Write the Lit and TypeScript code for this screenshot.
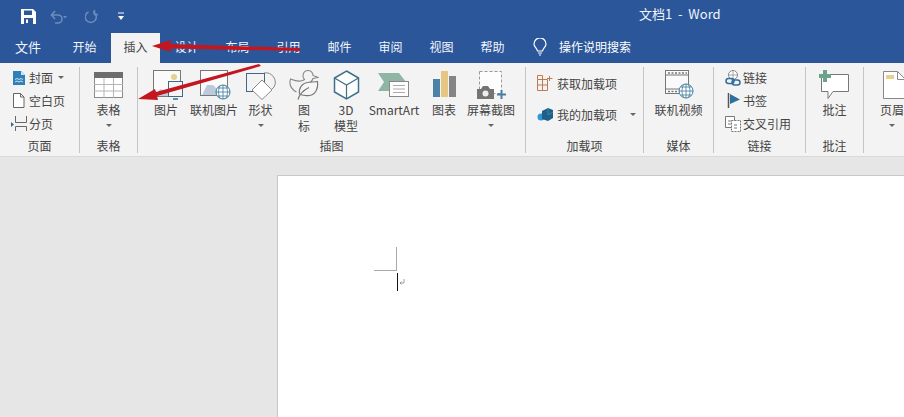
import { LitElement, html, css, svg } from "lit";
import { customElement } from "lit/decorators.js";

const ic = (w: number, h: number, body: unknown) =>
  html`<svg width=${w} height=${h} viewBox="0 0 ${w} ${h}" fill="none">${body}</svg>`;

const icons: Record<string, unknown> = {
  cover: ic(12, 14, svg`<path d="M0 0h8l4 4v10H0z" fill="#2f7fb8"/><path d="M8 0v4h4z" fill="#d5e6f1"/><path d="M2 8.500l2-1 2 1 2-1 2 1M2 11l2-1 2 1 2-1 2 1" stroke="#dcecf5" stroke-width=".9"/>`),
  blank: ic(13, 15, svg`<path d="M1.500.5h7l3.500 3.500v10.500H1.500z" stroke="#666" fill="#fff"/><path d="M8.500.5V4H12" stroke="#666"/>`),
  pagebreak: ic(16, 15, svg`<path d="M4.500 0v6.500h11V0M4.500 15v-4.500h11V15" stroke="#666"/><path d="M0 6l3 2.500L0 11z" fill="#2f6f9f"/>`),
  table: ic(29, 26, svg`<rect x=".5" y=".5" width="28" height="25" fill="#fff" stroke="#8a8a8a"/><rect x="0" y="0" width="29" height="6" fill="#6d6d6d"/><path d="M0 12.500h29M0 19h29M10 6v20M19.500 6v20" stroke="#b5b5b5"/>`),
  picture: ic(34, 30, svg`<rect x="4.500" y=".5" width="27" height="26" fill="#fafafa" stroke="#777"/><circle cx="25" cy="7" r="3" fill="#e7cf8f"/><path d="M6 26l5-7 6 2 4 5z" fill="#c3ccd9"/><rect x="19.500" y="11.500" width="14" height="15" fill="#f5f5f5" stroke="#3d6a88"/><path d="M24 29h5" stroke="#3d6a88" stroke-width="1.500"/>`),
  online: ic(34, 30, svg`<rect x="3.500" y=".5" width="27" height="25" fill="#fafafa" stroke="#777"/><path d="M5 25l5-10h6l5 5v5z" fill="#bccbdc"/><circle cx="26" cy="22" r="7" fill="#fff" stroke="#3d7a9c"/><path d="M19 22h14M26 15v14M21 18h10M21 26h10M23 16c-2 4-2 8 0 12M29 16c2 4 2 8 0 12" stroke="#3d7a9c" stroke-width=".8"/>`),
  shapes: ic(32, 31, svg`<path d="M19 4a9.500 9.500 0 0 1 10 14l-6 6" stroke="#888" fill="none"/><rect x="1.500" y="4.500" width="18" height="18" fill="none" stroke="#3d6a88"/><path d="M17 11l10 10-10 9.500L7 21z" fill="#fff" stroke="#888"/>`),
  icon: ic(30, 30, svg`<path d="M14 5.500a5 5 0 0 1 10 0l5 2-5 1c-.5 2-1.500 3-3 4M14 5.500c0 2 .5 3 1.500 4-3 2.500-8 2-14-.5-1.500 5 .5 10 6 13" stroke="#888" stroke-width="1.100"/><path d="M9 29.500c1-4 5-9 11-12M10.500 24c-1-6 3-11 8-11.500 4-.5 7-.5 10-1 1 7-2 13-8 14-4 .5-7 0-10-1.500z" stroke="#777" stroke-width="1.100" fill="#f6f6f6"/>`),
  cube: ic(27, 30, svg`<path d="M13.500 1l12 7v14l-12 7-12-7V8z" stroke="#3f7088" stroke-width="1.500" fill="#fdfdfd"/><path d="M1.500 8l12 7 12-7M13.500 15v14" stroke="#3f7088" stroke-width="1.200"/>`),
  smartart: ic(32, 26, svg`<path d="M0 1h21l7 9-7 9H0l6-9z" fill="#8fb5a5"/><rect x="11.500" y="9.500" width="19" height="15" fill="#fff" stroke="#888"/><path d="M15 13.500h12M15 17h12M15 20.500h12" stroke="#aaa"/>`),
  chart: ic(24, 27, svg`<rect x="1" y="8" width="7" height="18" fill="#4e81a8"/><rect x="9" y="0" width="7" height="26" fill="#e6c683"/><rect x="17" y="5" width="7" height="21" fill="#858585"/>`),
  shot: ic(30, 28, svg`<rect x="3.500" y=".5" width="22" height="22" fill="#fdfdfd" stroke="#999" stroke-dasharray="3 2"/><path d="M1 18h4l2-3h5l2 3h4v10H1z" fill="#747474"/><circle cx="9.500" cy="22.500" r="3" fill="#eee"/><path d="M21 23.500h9M25.500 19v9" stroke="#4a7fa3" stroke-width="2"/>`),
  getaddin: ic(16, 16, svg`<path d="M.5 4.500h10v11H.5zM.5 10h10M5.500 4.500v11M.5 4.500V.5h5v4" stroke="#c07a50"/><path d="M10 3.500h5.500M12.500 1v5" stroke="#c07a50"/>`),
  myaddin: ic(16, 15, svg`<circle cx="4" cy="10" r="3.500" fill="#2f97d6"/><path d="M5 4l6-3 5 2v8l-5 3-6-2z" fill="#1f5f88"/><path d="M11 1v7l5-3" stroke="#3c86b5"/>`),
  video: ic(30, 30, svg`<rect x="1.500" y=".5" width="23" height="23" fill="#fafafa" stroke="#777"/><path d="M1 5h24M1 19h24" stroke="#777"/><path d="M4 3h19M4 21.500h10" stroke="#777" stroke-dasharray="2 1.500" stroke-width="1.600"/><circle cx="22" cy="21" r="7" fill="#fff" stroke="#3d7a9c"/><path d="M15 21h14M22 14v14M17 17h10M17 25h10M19.500 15c-2 4-2 8 0 12M24.500 15c2 4 2 8 0 12" stroke="#3d7a9c" stroke-width=".8"/>`),
  link: ic(16, 16, svg`<circle cx="8" cy="5" r="4.500" fill="#fff" stroke="#888"/><path d="M3.500 5h9M8 .5v9" stroke="#888" stroke-width=".7"/><rect x="1" y="8.500" width="8" height="5" rx="2.500" stroke="#2f6f9f" stroke-width="1.500"/><rect x="7" y="10" width="8" height="5" rx="2.500" stroke="#2f6f9f" stroke-width="1.500"/>`),
  bookmark: ic(14, 15, svg`<path d="M2.500 0v15" stroke="#555" stroke-width="1.500"/><path d="M4 1l10 5.500L4 11z" fill="#2f6f9f"/>`),
  xref: ic(16, 16, svg`<path d="M.5 .5h9v11h-9z" stroke="#777" fill="#fff"/><path d="M6.500 4.500h9v11h-9z" stroke="#777" stroke-dasharray="2 1" fill="#fff"/><path d="M3 5h3M3 8h3M9 9h3M9 12h3" stroke="#777"/>`),
  comment: ic(31, 29, svg`<path d="M2.500 4.500h27v17H14l-5 7v-7H2.500z" fill="#fff" stroke="#777"/><path d="M0 6h12M6 0v12" stroke="#6aa389" stroke-width="4"/>`),
  header: ic(24, 28, svg`<path d="M3.500.5h14l8 8v19h-22z" fill="#fff" stroke="#888"/><path d="M17.500.5v8h8" stroke="#888"/><rect x="6" y="4" width="8" height="4" fill="#e6cf8f"/>`),
};

type Big = { w: number; lines: string[]; icon: string; arrow?: boolean };
const illus: Big[] = [
  { w: 48, lines: ["图片"], icon: "picture" },
  { w: 48, lines: ["联机图片"], icon: "online" },
  { w: 45, lines: ["形状"], icon: "shapes", arrow: true },
  { w: 42, lines: ["图", "标"], icon: "icon" },
  { w: 42, lines: ["3D", "模型"], icon: "cube" },
  { w: 54, lines: ["SmartArt"], icon: "smartart" },
  { w: 46, lines: ["图表"], icon: "chart" },
  { w: 48, lines: ["屏幕截图"], icon: "shot", arrow: true },
];
const tabs = ["开始", "插入", "设计", "布局", "引用", "邮件", "审阅", "视图", "帮助"];

@customElement("app-root")
export class AppRoot extends LitElement {
  static styles = css`
    :host { display: block; width: 904px; height: 417px; overflow: hidden; position: relative;
      font-family: "Noto Sans CJK SC", "Liberation Sans", sans-serif; font-size: 12px; color: #444; }
    .root { display: flex; flex-direction: column; height: 100%; }
    svg { display: block; flex: none; }
    .title { height: 33px; background: #2b579a; display: flex; align-items: center; padding-left: 21px; color: #fff; flex: none; }
    .qat { display: flex; align-items: center; }
    .sp1 { width: 14px; } .sp2 { width: 18px; } .sp3 { width: 20px; }
    .name { margin: 0 0 6px 515px; white-space: pre; font-size: 13px; color: #f0f4fa; }
    .tabs { height: 30px; background: #2b579a; display: flex; align-items: center; color: #fff; flex: none; }
    .tab { width: 51px; height: 30px; line-height: 27px; text-align: center; flex: none; color: #f2f5fa; }
    .tab.file { width: 56px; margin-right: 3px; font-size: 13px; }
    .tab.on { background: #f3f3f3; color: #444; width: 49px; margin: 0 1px; }
    .bulb { margin: 0 12px 3px 15px; }
    .search { margin-bottom: 3px; }
    .ribbon { height: 94px; background: #f3f3f3; display: flex; padding-top: 4px; box-sizing: border-box; border-bottom: 1px solid #d9d9d9; flex: none; }
    .group { display: flex; flex-direction: column; height: 86px; border-right: 1px solid #c4c4c4; box-sizing: border-box; flex: none; }
    .body { flex: 1; display: flex; min-height: 0; }
    .label { height: 14px; line-height: 14px; text-align: center; color: #444; }
    .g1 { width: 80px; } .g2 { width: 58px; } .g3 { width: 388px; } .g4 { width: 118px; }
    .g5 { width: 70px; } .g6 { width: 92px; } .g7 { width: 58px; } .g8 { width: 56px; border-right: 0; }
    .g3 .body { padding-left: 4px; }
    .stack { display: flex; flex-direction: column; margin-top: -1px; }
    .small { height: 23px; flex: none; display: flex; align-items: center; white-space: nowrap; }
    .g1 .small { padding-left: 8px; } .g6 .small { padding-left: 8px; }
    .slot { width: 21px; display: flex; justify-content: center; flex: none; }
    .caret { width: 0; height: 0; border: 3px solid transparent; border-top: 3px solid #666; border-bottom: 0; flex: none; }
    .small .caret { margin-left: 5px; }
    .big { display: flex; flex-direction: column; align-items: center; flex: none; white-space: nowrap; }
    .pic { height: 35px; display: flex; align-items: center; justify-content: center; }
    .big .line { height: 16px; line-height: 16px; }
    .big .caret { margin-top: 6px; }
    .full { width: 100%; }
    .adds { display: flex; flex-direction: column; padding: 6px 0 0 11px; gap: 11px; }
    .addrow { display: flex; align-items: center; height: 20px; gap: 4px; white-space: nowrap; }
    .addrow .caret { margin-left: 9px; }
    .doc { flex: 1; background: #e6e6e6; padding: 18px 0 0 277px; min-height: 0; }
    .page { background: #fff; height: 100%; border-top: 1px solid #c8c8c8; border-left: 1px solid #c8c8c8; box-sizing: border-box; padding: 71px 0 0 96px; }
    .crop { width: 22px; height: 23px; border-right: 1px solid #a8a8a8; border-bottom: 1px solid #a8a8a8; }
    .cursor { display: flex; margin: 2px 0 0 23px; }
    .caretbar { width: 1px; height: 18px; background: #111; }
    .pil { margin: 6px 0 0 1px; }
    .arrows { position: absolute; left: 0; top: 0; pointer-events: none; }
  `;

  private bigBtn(b: Big) {
    return html`<div class="big" style="width:${b.w}px">
      <div class="pic">${icons[b.icon]}</div>
      ${b.lines.map((l) => html`<div class="line">${l}</div>`)}
      ${b.arrow ? html`<div class="caret"></div>` : ""}
    </div>`;
  }

  private small(icon: string, text: string, caret = false) {
    return html`<div class="small"><span class="slot">${icons[icon]}</span><span>${text}</span>${caret ? html`<span class="caret"></span>` : ""}</div>`;
  }

  render() {
    return html`<div class="root">
      <div class="title">
        <div class="qat">
          ${ic(15, 15, svg`<path d="M0 0h12l3 3v12H0z" fill="#fff"/><rect x="3" y="1.500" width="8" height="4.500" fill="#2b579a"/><rect x="3" y="9" width="9" height="6" fill="#2b579a"/><rect x="5" y="10.500" width="2" height="3.500" fill="#fff"/>`)}
          <span class="sp1"></span>
          ${ic(17, 14, svg`<path d="M5 1L1.500 5 5 9M2 5h6a4 4 0 010 8H5" stroke="#6d8cbc" stroke-width="1.600"/><path d="M13 6h4l-2 2.500z" fill="#6d8cbc"/>`)}
          <span class="sp2"></span>
          ${ic(13, 14, svg`<path d="M8 2a5.500 5.500 0 11-4.500 0M9.500 0v4.500H13" stroke="#6d8cbc" stroke-width="1.500"/>`)}
          <span class="sp3"></span>
          ${ic(6, 9, svg`<path d="M0 1h6" stroke="#fff"/><path d="M0 4h6L3 8z" fill="#fff"/>`)}
        </div>
        <span class="name">文档1  -  Word</span>
      </div>
      <div class="tabs">
        <div class="tab file">文件</div>
        ${tabs.map((t) => html`<div class="tab ${t === "插入" ? "on" : ""}">${t}</div>`)}
        <span class="bulb">${ic(14, 18, svg`<path d="M4.500 13C4 10 1 9 1 6a6 6 0 0112 0c0 3-3 4-3.500 7z" stroke="#fff" stroke-width="1.200"/><path d="M5 15h4M6 17h2" stroke="#fff"/>`)}</span>
        <span class="search">操作说明搜索</span>
      </div>
      <div class="ribbon">
        <div class="group g1">
          <div class="body stack">
            ${this.small("cover", "封面", true)}
            ${this.small("blank", "空白页")}
            ${this.small("pagebreak", "分页")}
          </div>
          <div class="label">页面</div>
        </div>
        <div class="group g2">
          <div class="body"><div class="big full"><div class="pic">${icons.table}</div><div class="line">表格</div><div class="caret"></div></div></div>
          <div class="label">表格</div>
        </div>
        <div class="group g3">
          <div class="body">${illus.map((b) => this.bigBtn(b))}</div>
          <div class="label">插图</div>
        </div>
        <div class="group g4">
          <div class="body"><div class="adds">
            <div class="addrow">${icons.getaddin}<span>获取加载项</span></div>
            <div class="addrow">${icons.myaddin}<span>我的加载项</span><span class="caret"></span></div>
          </div></div>
          <div class="label">加载项</div>
        </div>
        <div class="group g5">
          <div class="body"><div class="big full"><div class="pic">${icons.video}</div><div class="line">联机视频</div></div></div>
          <div class="label">媒体</div>
        </div>
        <div class="group g6">
          <div class="body stack">
            ${this.small("link", "链接")}
            ${this.small("bookmark", "书签")}
            ${this.small("xref", "交叉引用")}
          </div>
          <div class="label">链接</div>
        </div>
        <div class="group g7">
          <div class="body"><div class="big full"><div class="pic">${icons.comment}</div><div class="line">批注</div></div></div>
          <div class="label">批注</div>
        </div>
        <div class="group g8">
          <div class="body"><div class="big full"><div class="pic">${icons.header}</div><div class="line">页眉</div><div class="caret"></div></div></div>
        </div>
      </div>
      <div class="doc">
        <div class="page">
          <div class="crop"></div>
          <div class="cursor"><div class="caretbar"></div>
            <span class="pil">${ic(6, 7, svg`<path d="M5 0v4H1M2.500 2.500L1 4l1.500 1.500" stroke="#888" stroke-width=".8"/>`)}</span>
          </div>
        </div>
      </div>
      <svg class="arrows" width="904" height="417" viewBox="0 0 904 417">
        <path d="M152 46L171 40 170 44 300 48V51L170 48.500 171 52z" fill="#c4161f"/>
        <path d="M138 99L155 89 156 92 259 64 261 66 157 96 158 100z" fill="#c4161f"/>
      </svg>
    </div>`;
  }
}
